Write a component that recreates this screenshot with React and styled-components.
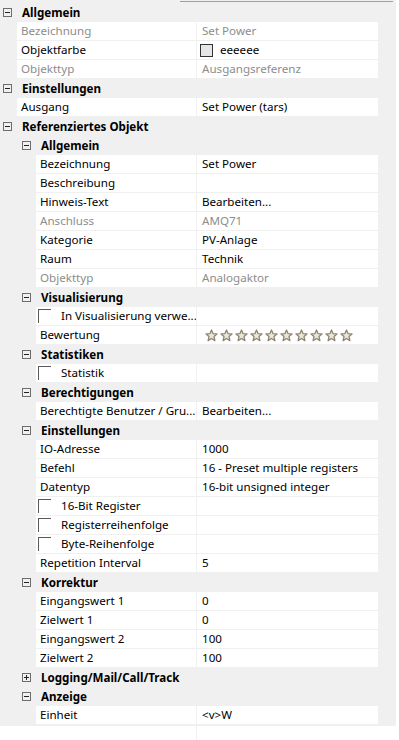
import React from 'react';
import styled, { createGlobalStyle } from 'styled-components';

const GlobalStyle = createGlobalStyle`
html, body {
  margin: 0;
  padding: 0;
  background: #ffffff;
}
body {
  font-family: "Noto Sans", "Open Sans", sans-serif;
  font-size: 11.6px;
  color: #000;
}
`

const LABEL_END = 196;
const VALUE_WIDTH = 181;

const rows = [
    { type: 'head', level: 0, label: 'Allgemein' },
    { level: 0, label: 'Bezeichnung', value: 'Set Power', dim: true },
    { level: 0, label: 'Objektfarbe', value: 'eeeeee', swatch: '#e6e6e6' },
    { level: 0, label: 'Objekttyp', value: 'Ausgangsreferenz', dim: true },
    { type: 'head', level: 0, label: 'Einstellungen' },
    { level: 0, label: 'Ausgang', value: 'Set Power (tars)' },
    { type: 'head', level: 0, label: 'Referenziertes Objekt' },
    { type: 'head', level: 1, label: 'Allgemein' },
    { level: 1, label: 'Bezeichnung', value: 'Set Power' },
    { level: 1, label: 'Beschreibung', value: '' },
    { level: 1, label: 'Hinweis-Text', value: 'Bearbeiten...' },
    { level: 1, label: 'Anschluss', value: 'AMQ71', dim: true },
    { level: 1, label: 'Kategorie', value: 'PV-Anlage' },
    { level: 1, label: 'Raum', value: 'Technik' },
    { level: 1, label: 'Objekttyp', value: 'Analogaktor', dim: true },
    { type: 'head', level: 1, label: 'Visualisierung' },
    { level: 1, label: 'In Visualisierung verwe...', check: true },
    { level: 1, label: 'Bewertung', stars: 10 },
    { type: 'head', level: 1, label: 'Statistiken' },
    { level: 1, label: 'Statistik', check: true },
    { type: 'head', level: 1, label: 'Berechtigungen' },
    { level: 1, label: 'Berechtigte Benutzer / Gru...', value: 'Bearbeiten...' },
    { type: 'head', level: 1, label: 'Einstellungen' },
    { level: 1, label: 'IO-Adresse', value: '1000' },
    { level: 1, label: 'Befehl', value: '16 - Preset multiple registers' },
    { level: 1, label: 'Datentyp', value: '16-bit unsigned integer' },
    { level: 1, label: '16-Bit Register', check: true },
    { level: 1, label: 'Registerreihenfolge', check: true },
    { level: 1, label: 'Byte-Reihenfolge', check: true },
    { level: 1, label: 'Repetition Interval', value: '5' },
    { type: 'head', level: 1, label: 'Korrektur' },
    { level: 1, label: 'Eingangswert 1', value: '0' },
    { level: 1, label: 'Zielwert 1', value: '0' },
    { level: 1, label: 'Eingangswert 2', value: '100' },
    { level: 1, label: 'Zielwert 2', value: '100' },
    { type: 'head', level: 1, label: 'Logging/Mail/Call/Track', collapsed: true },
    { type: 'head', level: 1, label: 'Anzeige' },
    { level: 1, label: 'Einheit', value: '<v>W' },
]

const indentFor = level => (level === 0 ? 17 : 36);

const Star = () => (
    <svg width="13" height="13" viewBox="0 0 13 13">
        <path
            d="M6.5 1 L8.1 4.7 L12 5 L9 7.6 L9.9 11.6 L6.5 9.5 L3.1 11.6 L4 7.6 L1 5 L4.9 4.7 Z"
            fill="#ebe7dd"
            stroke="#8f8672"
            strokeWidth="1.3"
            strokeLinejoin="round"
        />
    </svg>
)

const Toggle = ({ collapsed }) => (
    <ToggleBox>
        <svg width="9" height="9" viewBox="0 0 9 9">
            <rect x="0.5" y="0.5" width="8" height="8" fill="none" stroke="#6d6d6d" />
            <line x1="2" y1="4.5" x2="7" y2="4.5" stroke="#222" />
            {collapsed && <line x1="4.5" y1="2" x2="4.5" y2="7" stroke="#222" />}
        </svg>
    </ToggleBox>
)

const PropertyRow = ({ row }) => {
    const indent = indentFor(row.level);
    return (
        <Row>
            <Indent $w={indent} />
            <LabelCell $w={LABEL_END - indent} $dim={row.dim}>
                {row.check && <CheckBox />}
                <LabelText>{row.label}</LabelText>
            </LabelCell>
            <Divider />
            <ValueCell $dim={row.dim}>
                {row.swatch && <Swatch $color={row.swatch} />}
                {row.stars && (
                    <Stars>
                        {Array.from({ length: row.stars }).map((_, i) => <Star key={i} />)}
                    </Stars>
                )}
                {row.value}
            </ValueCell>
            <Gutter />
        </Row>
    )
}

const HeadRow = ({ row }) => (
    <Head $indent={indentFor(row.level)}>
        <Toggle collapsed={row.collapsed} />
        <HeadText>{row.label}</HeadText>
    </Head>
)

const App = () => {
    return (
        <>
            <GlobalStyle />
            <Grid>
                <TopLine />
                <Rows>
                    {rows.map((row, i) =>
                        row.type === 'head'
                            ? <HeadRow key={i} row={row} />
                            : <PropertyRow key={i} row={row} />
                    )}
                </Rows>
                <Filler>
                    <FillerLeft />
                    <Divider />
                    <FillerRight />
                </Filler>
            </Grid>
        </>
    )
}

export default App;

// CSS //
const Grid = styled.div`
width: 396px;
height: 740px;
display: flex;
flex-direction: column;
background: #f0f0f0;
overflow: hidden;
`

const TopLine = styled.div`
height: 1px;
margin: 1px 3px 1px 180px;
background: #a0a0a0;
`

const Rows = styled.div`
display: flex;
flex-direction: column;
`

const Row = styled.div`
display: flex;
height: 18px;
border-bottom: 1px solid #f0f0f0;
`

const Indent = styled.div`
width: ${p => p.$w}px;
flex: none;
background: #f0f0f0;
`

const LabelCell = styled.div`
width: ${p => p.$w}px;
flex: none;
display: flex;
align-items: center;
padding-left: 4px;
box-sizing: border-box;
background: #fff;
color: ${p => (p.$dim ? '#8d8d8d' : '#000')};
overflow: hidden;
`

const LabelText = styled.span`
white-space: nowrap;
line-height: 18px;
`

const CheckBox = styled.span`
width: 13px;
height: 14px;
flex: none;
box-sizing: border-box;
border-top: 1px solid #5a5a5a;
border-left: 1px solid #5a5a5a;
margin: 2px 10px 0 -2px;
align-self: flex-start;
`

const Divider = styled.div`
width: 1px;
flex: none;
background: #f0f0f0;
`

const ValueCell = styled.div`
width: ${VALUE_WIDTH}px;
flex: none;
display: flex;
align-items: center;
padding-left: 5px;
box-sizing: border-box;
background: #fff;
white-space: nowrap;
line-height: 18px;
color: ${p => (p.$dim ? '#8d8d8d' : '#000')};
`

const Gutter = styled.div`
flex: 1;
background: #f0f0f0;
`

const Swatch = styled.span`
width: 13px;
height: 13px;
box-sizing: border-box;
border: 1px solid #333;
background: ${p => p.$color};
margin: 0 7px 0 -2px;
`

const Stars = styled.span`
display: flex;
gap: 2px;
margin-left: 3px;
`

const Head = styled.div`
display: flex;
align-items: center;
height: 19px;
padding-left: ${p => p.$indent - 14}px;
`

const ToggleBox = styled.span`
width: 9px;
height: 9px;
display: flex;
margin-right: 10px;
`

const HeadText = styled.span`
font-weight: 700;
white-space: nowrap;
`

const Filler = styled.div`
flex: 1;
display: flex;
background: #fff;
border-top: 1px solid #f0f0f0;
`

const FillerLeft = styled.div`
width: ${LABEL_END}px;
`

const FillerRight = styled.div`
flex: 1;
`
